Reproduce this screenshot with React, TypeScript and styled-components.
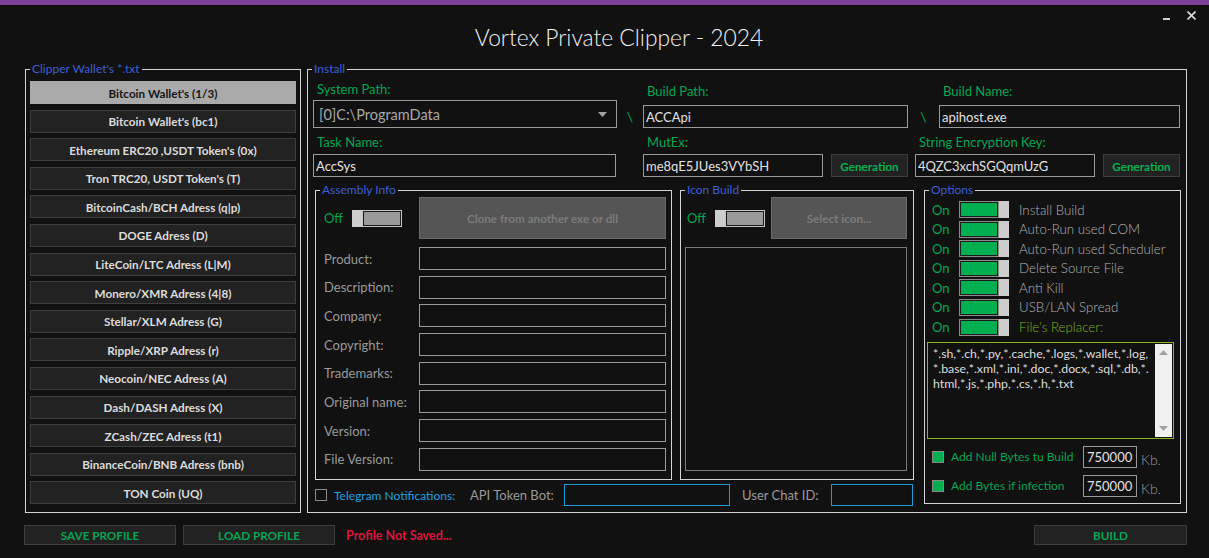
import React from 'react';
import styled, { createGlobalStyle } from 'styled-components';

const GlobalStyle = createGlobalStyle`
  html, body {
    margin: 0;
    padding: 0;
    background: #111111;
  }
  body {
    font-family: Lato, 'Open Sans', sans-serif;
  }
  * {
    box-sizing: border-box;
  }
`;

const green = '#00a651';

const Window = styled.div`
  width: 1209px;
  height: 558px;
  background: #111111;
  display: flex;
  flex-direction: column;
  overflow: hidden;
`;

const TopStripe = styled.div`
  height: 5px;
  background: #7e3f98;
`;

const TitleBar = styled.div`
  height: 64px;
  display: grid;
  grid-template-columns: 1fr auto 1fr;
  align-items: start;
`;

const Title = styled.h1`
  grid-column: 2;
  margin: 0;
  padding: 18px 0 0 29px;
  font-size: 22.8px;
  line-height: 29px;
  font-weight: 300;
  color: #f2f2f2;
  white-space: nowrap;
`;

const WindowControls = styled.div`
  grid-column: 3;
  justify-self: end;
  display: flex;
  align-items: flex-start;
  gap: 17px;
  padding: 6px 13px 0 0;
`;

const MinimizeGlyph = styled.span`
  width: 7px;
  height: 2px;
  margin-top: 7px;
  background: #cfcfcf;
`;

const Main = styled.div`
  display: flex;
  gap: 6px;
  padding-left: 25px;
  height: 444px;
`;

const GroupBox = styled.div<{ $w: number; $h: number }>`
  position: relative;
  flex-shrink: 0;
  width: ${({ $w }) => $w}px;
  height: ${({ $h }) => $h}px;
  border: 1px solid #d4d4d4;
`;

const Caption = styled.span`
  position: absolute;
  top: -8px;
  left: 4px;
  padding: 0 2px;
  background: #111111;
  color: #3d5fd6;
  font-size: 12px;
  line-height: 14px;
  white-space: nowrap;
`;

const WalletList = styled.div`
  display: flex;
  flex-direction: column;
  gap: 5.6px;
  padding: 11px 4px 0;
`;

const WalletButton = styled.div<{ $active?: boolean }>`
  height: 23px;
  display: flex;
  align-items: center;
  justify-content: center;
  border: 1px solid ${({ $active }) => ($active ? '#aaaaaa' : '#3e3e3e')};
  background: ${({ $active }) => ($active ? '#aaaaaa' : '#222222')};
  color: ${({ $active }) => ($active ? '#151515' : '#dcdcdc')};
  font-size: 11.7px;
  font-weight: 700;
  white-space: nowrap;
`;

const FieldRow = styled.div<{ $mt: number; $ml: number }>`
  display: flex;
  align-items: flex-end;
  margin: ${({ $mt, $ml }) => `${$mt}px 0 0 ${$ml}px`};
`;

const FieldColumn = styled.div<{ $w: number; $ml?: number }>`
  display: flex;
  flex-direction: column;
  width: ${({ $w }) => $w}px;
  margin-left: ${({ $ml = 0 }) => $ml}px;
`;

const FieldLabel = styled.div<{ $mb: number }>`
  height: 18px;
  line-height: 18px;
  padding-left: 4px;
  margin-bottom: ${({ $mb }) => $mb}px;
  color: ${green};
  font-size: 13px;
  white-space: nowrap;
`;

const InlineFields = styled.div`
  display: flex;
  gap: 8px;
`;

const TextBox = styled.input<{ $w?: number }>`
  width: ${({ $w }) => ($w ? `${$w}px` : '100%')};
  height: 23px;
  margin: 0;
  padding: 0 2px;
  border: 1px solid #9a9a9a;
  border-radius: 0;
  background: #111111;
  color: #e2e2e2;
  font-family: inherit;
  font-size: 13px;
  outline: none;
`;

const SelectBox = styled.div`
  height: 28px;
  display: flex;
  align-items: center;
  justify-content: space-between;
  padding: 0 9px 0 5px;
  border: 1px solid #9a9a9a;
  color: #a8a8a8;
  font-size: 14.5px;
`;

const Separator = styled.div<{ $w: number }>`
  width: ${({ $w }) => $w}px;
  height: 23px;
  display: flex;
  align-items: center;
  justify-content: center;
  color: ${green};
  font-size: 14px;
`;

const GenButton = styled.div`
  width: 77px;
  height: 23px;
  display: flex;
  align-items: center;
  justify-content: center;
  border: 1px solid #3c3c3c;
  background: #222222;
  color: #00b050;
  font-size: 11.7px;
  font-weight: 700;
`;

const LowerArea = styled.div`
  display: flex;
  align-items: flex-start;
  margin: 13px 0 0 7px;
`;

const LeftColumn = styled.div`
  display: flex;
  flex-direction: column;
  width: 599px;
`;

const GroupsRow = styled.div`
  display: flex;
  gap: 8px;
`;

const GroupContent = styled.div<{ $pl: number }>`
  display: flex;
  flex-direction: column;
  padding: 6px 0 0 ${({ $pl }) => $pl}px;
`;

const ToggleRow = styled.div<{ $pl?: number }>`
  height: 42px;
  display: flex;
  align-items: center;
  padding-left: ${({ $pl = 0 }) => $pl}px;
`;

const StateLabel = styled.span<{ $w?: number }>`
  width: ${({ $w = 28 }) => $w}px;
  color: ${green};
  font-size: 13px;
`;

const Toggle = styled.div<{ $on?: boolean }>`
  flex-shrink: 0;
  width: 50px;
  height: 17px;
  display: flex;
  flex-direction: ${({ $on }) => ($on ? 'row' : 'row-reverse')};
`;

const ToggleTrack = styled.span<{ $on?: boolean }>`
  flex: 1;
  border: 1px solid ${({ $on }) => ($on ? '#8a8a8a' : '#c4c4c4')};
  background: ${({ $on }) => ($on ? '#00b050' : '#9a9a9a')};
  box-shadow: inset 0 0 0 1px #1a1a1a;
`;

const ToggleKnob = styled.span`
  width: 10px;
  background: #cdcdcd;
`;

const ActionButton = styled.div<{ $w: number; $ml: number }>`
  width: ${({ $w }) => $w}px;
  height: 42px;
  margin-left: ${({ $ml }) => $ml}px;
  display: flex;
  align-items: center;
  justify-content: center;
  border: 1px solid #6a6a6a;
  background: #555555;
  color: #7c7c7c;
  font-size: 11.7px;
  font-weight: 700;
`;

const FormGrid = styled.div`
  display: grid;
  grid-template-columns: 95px 247px;
  grid-auto-rows: 23px;
  row-gap: 5.7px;
  margin-top: 8px;
`;

const FormLabel = styled.span`
  align-self: center;
  color: #9a9a9a;
  font-size: 13px;
  white-space: nowrap;
`;

const IconPreview = styled.div`
  width: 222px;
  height: 224px;
  margin-top: 8px;
  border: 1px solid #7a7a7a;
`;

const TelegramRow = styled.div`
  height: 22px;
  margin-top: 4px;
  display: flex;
  align-items: center;
`;

const CheckBox = styled.span<{ $checked?: boolean }>`
  flex-shrink: 0;
  width: 12px;
  height: 12px;
  border: 1px solid #8a8a8a;
  background: ${({ $checked }) => ($checked ? '#00b050' : 'transparent')};
`;

const InlineLabel = styled.span<{ $w: number; $ml?: number; $color?: string; $size?: number }>`
  width: ${({ $w }) => $w}px;
  margin-left: ${({ $ml = 0 }) => $ml}px;
  color: ${({ $color = '#9a9a9a' }) => $color};
  font-size: ${({ $size = 13 }) => $size}px;
  white-space: nowrap;
`;

const LinkBox = styled.div<{ $w: number }>`
  width: ${({ $w }) => $w}px;
  height: 22px;
  border: 1px solid #1e9ad6;
`;

const OptionsContent = styled.div`
  display: flex;
  flex-direction: column;
  padding: 10px 0 0 2px;
`;

const OptionsList = styled.div`
  display: flex;
  flex-direction: column;
  gap: 2.6px;
`;

const OptionRow = styled.div`
  height: 17px;
  display: flex;
  align-items: center;
  padding-left: 5px;
`;

const OptionLabel = styled.span<{ $accent?: boolean }>`
  margin-left: 10px;
  color: ${({ $accent }) => ($accent ? '#7cb518' : '#b4b4b4')};
  font-size: 13.3px;
  font-weight: 300;
  white-space: nowrap;
`;

const ReplacerBox = styled.div`
  width: 247px;
  height: 97px;
  margin-top: 6.4px;
  display: flex;
  border: 1px solid #8fb31d;
`;

const ReplacerText = styled.div`
  flex: 1;
  padding: 3px 0 0 5px;
  color: #dedede;
  font-size: 12.3px;
  line-height: 15px;
  white-space: nowrap;
  overflow: hidden;
`;

const ScrollBar = styled.div`
  width: 17px;
  margin: 1px 1px 1px 0;
  display: flex;
  flex-direction: column;
  justify-content: space-between;
  align-items: center;
  padding: 6px 0;
  background: #f0f0f0;
`;

const BytesRow = styled.div`
  height: 22px;
  margin-top: 7px;
  display: flex;
  align-items: center;
  padding-left: 5px;
`;

const BytesInput = styled.div`
  width: 54px;
  height: 22px;
  display: flex;
  align-items: center;
  padding-left: 3px;
  border: 1px solid #9a9a9a;
  color: #e2e2e2;
  font-size: 13px;
`;

const KbLabel = styled.span`
  align-self: flex-end;
  margin-left: 4px;
  color: #9a9a9a;
  font-size: 14px;
  font-weight: 300;
`;

const BottomBar = styled.div`
  height: 20px;
  margin-top: 12px;
  display: flex;
  align-items: center;
  gap: 7px;
  padding: 0 22px 0 24px;
`;

const FooterButton = styled.div<{ $w: number }>`
  width: ${({ $w }) => $w}px;
  height: 20px;
  display: flex;
  align-items: center;
  justify-content: center;
  border: 1px solid #3c3c3c;
  background: #222222;
  color: #00a651;
  font-size: 11.7px;
  font-weight: 700;
  &:last-child {
    margin-left: auto;
  }
`;

const StatusText = styled.span`
  margin-left: 4px;
  color: #dc143c;
  font-size: 12.5px;
  font-weight: 700;
`;

const wallets = [
  "Bitcoin Wallet's (1/3)",
  "Bitcoin Wallet's (bc1)",
  "Ethereum ERC20 ,USDT Token's (0x)",
  "Tron TRC20, USDT Token's (T)",
  'BitcoinCash/BCH Adress (q|p)',
  'DOGE Adress (D)',
  'LiteCoin/LTC Adress (L|M)',
  'Monero/XMR Adress (4|8)',
  'Stellar/XLM Adress (G)',
  'Ripple/XRP Adress (r)',
  'Neocoin/NEC Adress (A)',
  'Dash/DASH Adress (X)',
  'ZCash/ZEC Adress (t1)',
  'BinanceCoin/BNB Adress (bnb)',
  'TON Coin (UQ)',
];

const assemblyFields = [
  'Product:',
  'Description:',
  'Company:',
  'Copyright:',
  'Trademarks:',
  'Original name:',
  'Version:',
  'File Version:',
];

const options = [
  'Install Build',
  'Auto-Run used COM',
  'Auto-Run used Scheduler',
  'Delete Source File',
  'Anti Kill',
  'USB/LAN Spread',
];

const replacerLines = [
  '*.sh,*.ch,*.py,*.cache,*.logs,*.wallet,*.log,',
  '*.base,*.xml,*.ini,*.doc,*.docx,*.sql,*.db,*.',
  'html,*.js,*.php,*.cs,*.h,*.txt',
];

const Switch = ({ on }: { on?: boolean }) => (
  <Toggle $on={on}>
    <ToggleTrack $on={on} />
    <ToggleKnob />
  </Toggle>
);

const Arrow = ({ up, color = '#a3a3a3' }: { up?: boolean; color?: string }) => (
  <svg width="9" height="5" viewBox="0 0 9 5">
    <polygon points={up ? '0,5 9,5 4.5,0' : '0,0 9,0 4.5,5'} fill={color} />
  </svg>
);

const App: React.FC = () => (
  <>
    <GlobalStyle />
    <Window>
      <TopStripe />
      <TitleBar>
        <Title>Vortex Private Clipper - 2024</Title>
        <WindowControls>
          <MinimizeGlyph />
          <svg width="9" height="9" viewBox="0 0 9 9">
            <path d="M0.5 0.5 L8.5 8.5 M8.5 0.5 L0.5 8.5" stroke="#dcdcdc" strokeWidth="1.6" />
          </svg>
        </WindowControls>
      </TitleBar>

      <Main>
        <GroupBox $w={276} $h={444}>
          <Caption>Clipper Wallet's *.txt</Caption>
          <WalletList>
            {wallets.map((w, i) => (
              <WalletButton key={w} $active={i === 0}>
                {w}
              </WalletButton>
            ))}
          </WalletList>
        </GroupBox>

        <GroupBox $w={880} $h={444}>
          <Caption>Install</Caption>
          <FieldRow $mt={10} $ml={5}>
            <FieldColumn $w={304}>
              <FieldLabel $mb={2}>System Path:</FieldLabel>
              <SelectBox>
                [0]C:\ProgramData
                <Arrow />
              </SelectBox>
            </FieldColumn>
            <Separator $w={26}>\</Separator>
            <FieldColumn $w={265}>
              <FieldLabel $mb={5}>Build Path:</FieldLabel>
              <TextBox readOnly defaultValue="ACCApi" />
            </FieldColumn>
            <Separator $w={31}>\</Separator>
            <FieldColumn $w={241}>
              <FieldLabel $mb={5}>Build Name:</FieldLabel>
              <TextBox readOnly defaultValue="apihost.exe" />
            </FieldColumn>
          </FieldRow>

          <FieldRow $mt={5} $ml={5}>
            <FieldColumn $w={303}>
              <FieldLabel $mb={3}>Task Name:</FieldLabel>
              <TextBox readOnly defaultValue="AccSys" />
            </FieldColumn>
            <FieldColumn $w={265} $ml={27}>
              <FieldLabel $mb={3}>MutEx:</FieldLabel>
              <InlineFields>
                <TextBox $w={180} readOnly defaultValue="me8qE5JUes3VYbSH" />
                <GenButton>Generation</GenButton>
              </InlineFields>
            </FieldColumn>
            <FieldColumn $w={265} $ml={7}>
              <FieldLabel $mb={3}>String Encryption Key:</FieldLabel>
              <InlineFields>
                <TextBox $w={180} readOnly defaultValue="4QZC3xchSGQqmUzG" />
                <GenButton>Generation</GenButton>
              </InlineFields>
            </FieldColumn>
          </FieldRow>

          <LowerArea>
            <LeftColumn>
              <GroupsRow>
                <GroupBox $w={357} $h={290}>
                  <Caption>Assembly Info</Caption>
                  <GroupContent $pl={8}>
                    <ToggleRow>
                      <StateLabel>Off</StateLabel>
                      <Switch />
                      <ActionButton $w={247} $ml={17}>
                        Clone from another exe or dll
                      </ActionButton>
                    </ToggleRow>
                    <FormGrid>
                      {assemblyFields.map((f) => (
                        <React.Fragment key={f}>
                          <FormLabel>{f}</FormLabel>
                          <TextBox readOnly defaultValue="" />
                        </React.Fragment>
                      ))}
                    </FormGrid>
                  </GroupContent>
                </GroupBox>

                <GroupBox $w={234} $h={290}>
                  <Caption>Icon Build</Caption>
                  <GroupContent $pl={4}>
                    <ToggleRow $pl={2}>
                      <StateLabel>Off</StateLabel>
                      <Switch />
                      <ActionButton $w={136} $ml={6}>
                        Select icon...
                      </ActionButton>
                    </ToggleRow>
                    <IconPreview />
                  </GroupContent>
                </GroupBox>
              </GroupsRow>

              <TelegramRow>
                <CheckBox />
                <InlineLabel $w={136} $ml={7} $color="#1ba1e2" $size={12}>
                  Telegram Notifications:
                </InlineLabel>
                <InlineLabel $w={94}>API Token Bot:</InlineLabel>
                <LinkBox $w={166} />
                <InlineLabel $w={89} $ml={12}>
                  User Chat ID:
                </InlineLabel>
                <LinkBox $w={82} />
              </TelegramRow>
            </LeftColumn>

            <GroupBox $w={257} $h={314} style={{ marginLeft: 10 }}>
              <Caption>Options</Caption>
              <OptionsContent>
                <OptionsList>
                  {options.map((o) => (
                    <OptionRow key={o}>
                      <StateLabel $w={27}>On</StateLabel>
                      <Switch on />
                      <OptionLabel>{o}</OptionLabel>
                    </OptionRow>
                  ))}
                  <OptionRow>
                    <StateLabel $w={27}>On</StateLabel>
                    <Switch on />
                    <OptionLabel $accent>File's Replacer:</OptionLabel>
                  </OptionRow>
                </OptionsList>

                <ReplacerBox>
                  <ReplacerText>
                    {replacerLines.map((l) => (
                      <div key={l}>{l}</div>
                    ))}
                  </ReplacerText>
                  <ScrollBar>
                    <Arrow up />
                    <Arrow />
                  </ScrollBar>
                </ReplacerBox>

                <BytesRow>
                  <CheckBox $checked />
                  <InlineLabel $w={132} $ml={7} $color={green} $size={12}>
                    Add Null Bytes tu Build
                  </InlineLabel>
                  <BytesInput>750000</BytesInput>
                  <KbLabel>Kb.</KbLabel>
                </BytesRow>
                <BytesRow>
                  <CheckBox $checked />
                  <InlineLabel $w={132} $ml={7} $color={green} $size={12}>
                    Add Bytes if infection
                  </InlineLabel>
                  <BytesInput>750000</BytesInput>
                  <KbLabel>Kb.</KbLabel>
                </BytesRow>
              </OptionsContent>
            </GroupBox>
          </LowerArea>
        </GroupBox>
      </Main>

      <BottomBar>
        <FooterButton $w={152}>SAVE PROFILE</FooterButton>
        <FooterButton $w={152}>LOAD PROFILE</FooterButton>
        <StatusText>Profile Not Saved...</StatusText>
        <FooterButton $w={153}>BUILD</FooterButton>
      </BottomBar>
    </Window>
  </>
);

export default App;
